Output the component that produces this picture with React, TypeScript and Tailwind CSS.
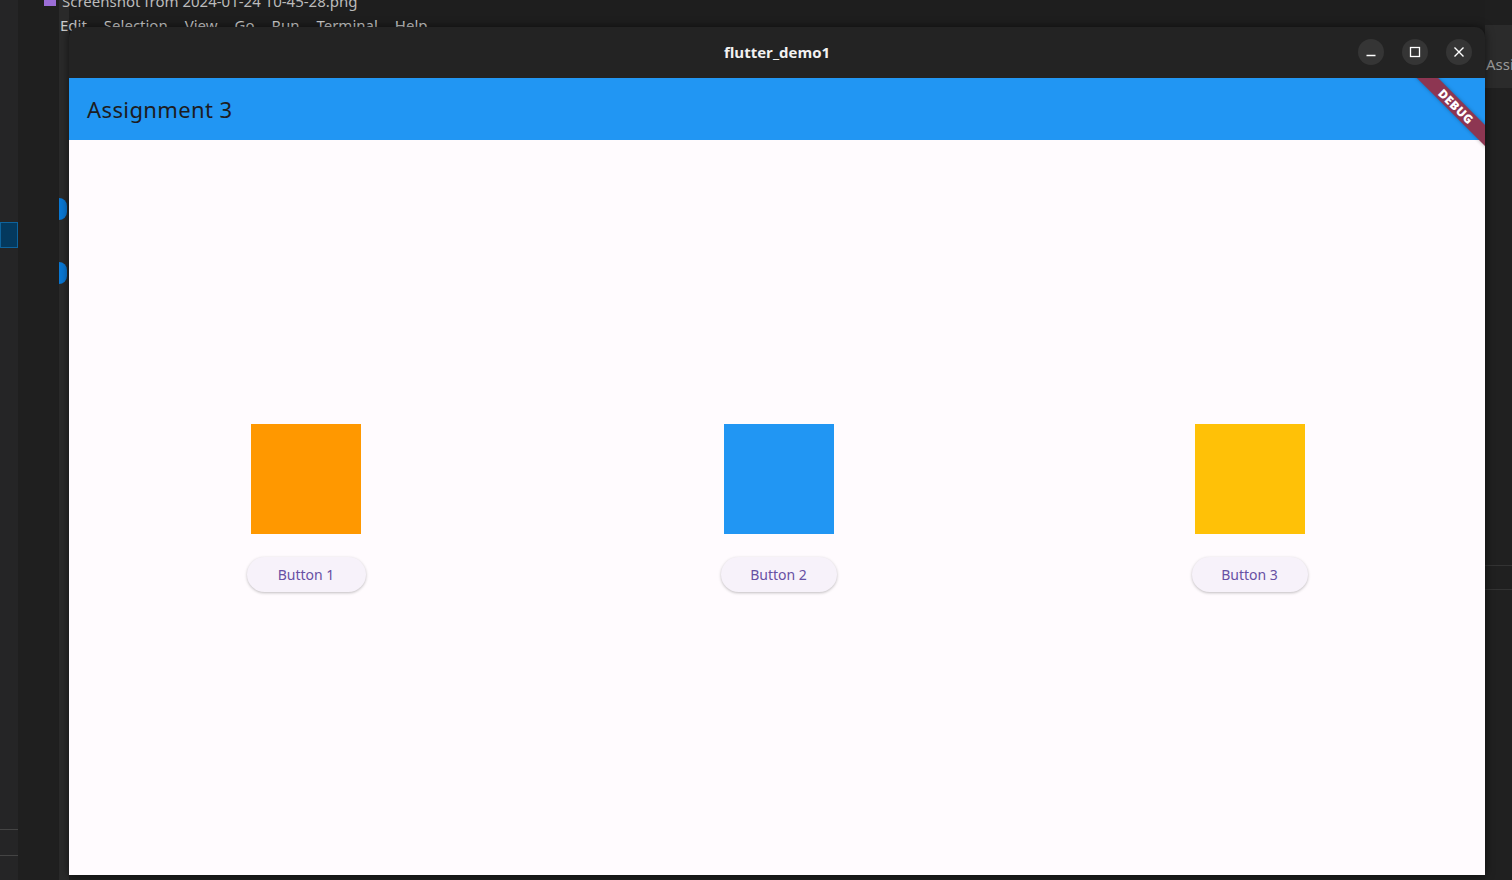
import React from "react";

const items = [
  { label: "Button 1", color: "bg-[#ff9800]", w: "w-[119px]" },
  { label: "Button 2", color: "bg-[#2196f3]", w: "w-[116px]" },
  { label: "Button 3", color: "bg-[#ffc107]", w: "w-[116px]" },
];

function WinButton({ children }: { children: React.ReactNode }) {
  return (
    <div className="flex h-[26px] w-[26px] items-center justify-center rounded-full bg-[#353535]">
      {children}
    </div>
  );
}

export default function App() {
  return (
    <div className="relative h-[880px] w-[1512px] overflow-hidden bg-[#1e1e1e] font-['Noto_Sans',sans-serif]">
      {/* desktop behind the window */}
      <div className="flex h-full">
        <div className="flex w-[18px] flex-col bg-[#252526]">
          <div className="h-[222px]" />
          <div className="h-[26px] border border-[#0e639c] bg-[#04395e]" />
          <div className="flex-1" />
          <div className="mb-[25px] h-px bg-[#444]" />
          <div className="mb-[24px] h-px bg-[#444]" />
        </div>
        <div className="w-[41px] bg-[#1f1f1f]" />
        <div className="flex w-[10px] flex-col items-start bg-[#2a2a2a]">
          <div className="mt-[198px] h-[22px] w-[8px] rounded-r-full bg-[#0a78d4]" />
          <div className="mt-[42px] h-[22px] w-[8px] rounded-r-full bg-[#0a78d4]" />
        </div>
        <div className="flex-1 bg-[#1e1e1e]" />
        <div className="flex w-[27px] flex-col">
          <div className="h-[25px] bg-[#1f1f1f]" />
          <div className="flex h-[63px] items-end overflow-hidden bg-[#2b2b2b] pb-[16px] pl-[1px] text-[15px] leading-none text-[#9a9a9a]">
            <span className="whitespace-nowrap">Assi</span>
          </div>
          <div className="h-[477px] bg-[#202020]" />
          <div className="h-px bg-[#333]" />
          <div className="h-[23px] bg-[#202020]" />
          <div className="h-px bg-[#333]" />
          <div className="flex-1 bg-[#202020]" />
        </div>
      </div>

      {/* desktop text partly hidden under the window */}
      <div className="absolute left-[44px] top-[-9px] flex items-center gap-[6px] text-[15px] leading-[20px] text-[#bbbbbb]">
        <span className="h-[9px] w-[12px] bg-[#9b6dd6]" />
        <span>Screenshot from 2024-01-24 10-45-28.png</span>
      </div>
      <div className="absolute left-[60px] top-[15px] flex gap-[17px] text-[15px] leading-[20px] text-[#cccccc]">
        <span>Edit</span>
        <span>Selection</span>
        <span>View</span>
        <span>Go</span>
        <span>Run</span>
        <span>Terminal</span>
        <span>Help</span>
      </div>

      {/* flutter window */}
      <div className="absolute left-[69px] top-[27px] flex h-[848px] w-[1416px] flex-col overflow-hidden rounded-t-[10px] shadow-[0_0_10px_rgba(0,0,0,0.6)]">
        <div className="relative flex h-[51px] shrink-0 items-center justify-center bg-[#232323]">
          <span className="font-['Open_Sans',sans-serif] text-[15px] font-bold text-[#f2f2f2]">
            flutter_demo1
          </span>
          <div className="absolute right-[13px] top-[12px] flex gap-[18px]">
            <WinButton>
              <svg width="12" height="12" viewBox="0 0 12 12">
                <path d="M1.5 9.5h9" stroke="#fff" strokeWidth="1.4" />
              </svg>
            </WinButton>
            <WinButton>
              <svg width="12" height="12" viewBox="0 0 12 12">
                <rect x="1.5" y="1.5" width="9" height="9" fill="none" stroke="#fff" strokeWidth="1.3" />
              </svg>
            </WinButton>
            <WinButton>
              <svg width="12" height="12" viewBox="0 0 12 12">
                <path d="M1.5 1.5l9 9M10.5 1.5l-9 9" stroke="#fff" strokeWidth="1.4" />
              </svg>
            </WinButton>
          </div>
        </div>

        <div className="relative flex flex-1 flex-col overflow-hidden bg-[#fffbfe]">
          {/* app bar */}
          <div className="flex h-[62px] shrink-0 items-center bg-[#2196f3] pl-[18px]">
            <span className="text-[22px] tracking-[0.4px] text-[#1d1b20]">Assignment 3</span>
          </div>

          {/* body */}
          <div className="flex flex-1 items-center justify-around pt-[1px]">
            {items.map((it) => (
              <div key={it.label} className="flex flex-col items-center">
                <div className={`h-[110px] w-[110px] ${it.color}`} />
                <div
                  className={`mt-[23px] flex h-[35px] ${it.w} items-center justify-center rounded-full bg-[#f7f2fa] pb-[1px] text-[14px] text-[#6750a4] shadow-[0_1px_3px_rgba(0,0,0,0.25)]`}
                >
                  {it.label}
                </div>
              </div>
            ))}
          </div>

          {/* debug banner */}
          <div className="absolute right-[-33px] top-[21px] flex h-[15px] w-[124px] rotate-45 items-center justify-center bg-[#8d3652] shadow-[0_0_4px_rgba(0,0,0,0.3)]">
            <span className="text-[12px] font-black leading-none tracking-[0.5px] text-white">
              DEBUG
            </span>
          </div>
        </div>
      </div>
    </div>
  );
}
